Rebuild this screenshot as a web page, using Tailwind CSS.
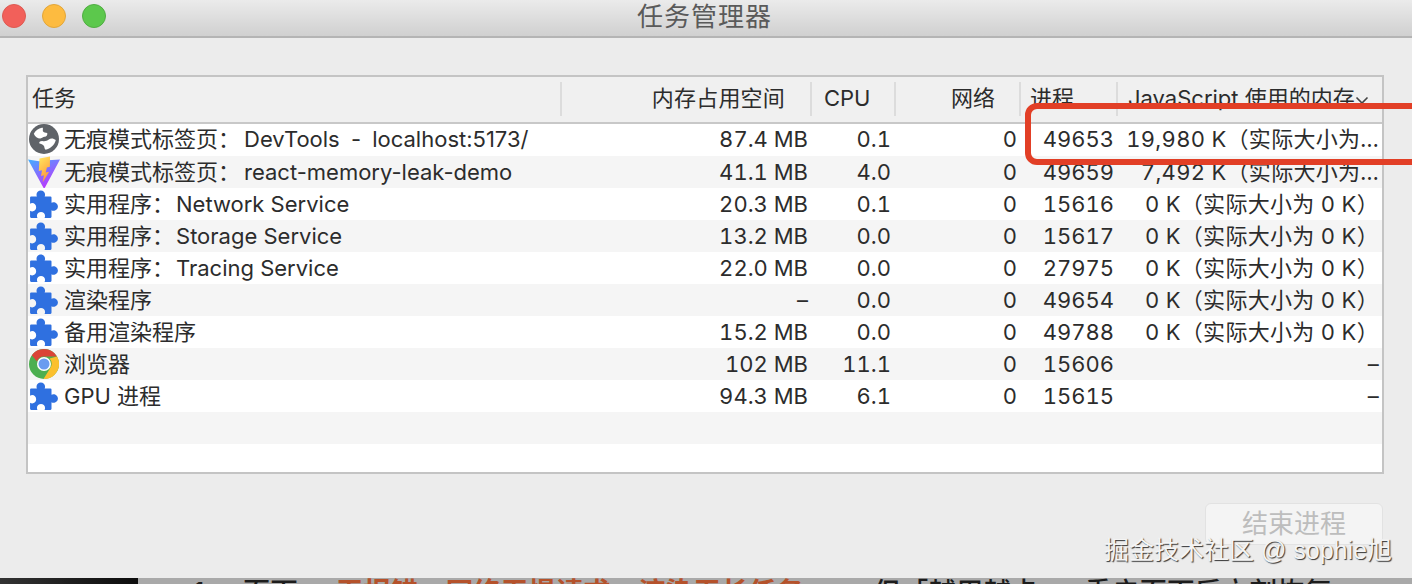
<!DOCTYPE html>
<html lang="zh-CN">
<head>
  <meta charset="UTF-8" />
  <title>任务管理器</title>
  <script src="https://cdn.jsdelivr.net/npm/@tailwindcss/browser@4"></script>
</head>
<body class="bg-[#ececec] font-['Inter','Noto_Sans_CJK_SC',sans-serif] text-[#2c2c2c]">
  <div class="relative w-[1412px] h-[584px] overflow-hidden flex flex-col">

    <!-- Title bar -->
    <header class="relative shrink-0 h-[38px] border-b-2 border-[#b4b4b4] bg-gradient-to-b from-[#ebebeb] to-[#d0d0d0] flex items-center justify-center">
      <div class="absolute left-[2px] top-[4px] flex gap-[16px]">
        <span class="w-[24px] h-[24px] rounded-full bg-[#f2605a] border border-[#dd5a52]"></span>
        <span class="w-[24px] h-[24px] rounded-full bg-[#fdbb40] border border-[#e2a63a]"></span>
        <span class="w-[24px] h-[24px] rounded-full bg-[#5cc84c] border border-[#50ad42]"></span>
      </div>
      <h1 class="text-[26px] leading-none tracking-[1px] text-[#5a5a5a] mt-[-2px] ml-[-3px]">任务管理器</h1>
    </header>

    <!-- Table -->
    <section class="mt-[37px] ml-[26px] w-[1358px] h-[399px] border-2 border-[#c4c4c4] bg-white flex flex-col shrink-0 overflow-hidden">
      <div class="h-[47px] shrink-0 bg-[#f0f0f0] border-b-2 border-[#c8c8c8] grid grid-cols-[532px_250px_84px_125px_97px_1fr] text-[22px] items-center pb-[2px]">
        <div class="pl-[4px]">任务</div>
        <div class="h-[34px] border-l-2 border-[#dcdcdc] pr-[25px] flex items-center justify-end tracking-[0.2px]">内存占用空间</div>
        <div class="h-[34px] border-l-2 border-[#dcdcdc] pl-[12px] flex items-center">CPU</div>
        <div class="h-[34px] border-l-2 border-[#dcdcdc] pr-[24px] flex items-center justify-end">网络</div>
        <div class="h-[34px] border-l-2 border-[#dcdcdc] pl-[9px] flex items-center">进程</div>
        <div class="h-[34px] border-l-2 border-[#dcdcdc] pl-[10px] flex items-center whitespace-nowrap">JavaScript 使用的内存<svg class="w-[14px] h-[9px] mt-[3px]" viewBox="0 0 14 9" fill="none" stroke="#444" stroke-width="1.6"><path d="M1.500 1.500l5.500 5.500 5.500-5.500"/></svg></div>
      </div>

      <div id="rows" class="flex flex-col flex-1 overflow-hidden"></div>
    </section>

    <!-- End process button -->
    <div class="absolute left-[1205px] top-[503px] w-[178px] h-[42px] rounded-[6px] bg-[#f4f4f4] border border-[#e2e2e2] flex items-center justify-center text-[26px] text-[#bdbdbd] pb-[2px]">结束进程</div>

    <!-- Red annotation -->
    <div class="absolute left-[1025px] top-[103px] w-[420px] h-[62px] rounded-[12px] border-[6px] border-[#e23f26]"></div>

    <!-- Watermark -->
    <div class="absolute left-[1104px] top-[534px] font-['Liberation_Sans','Noto_Sans_CJK_SC',sans-serif] text-[25px] leading-[32px] whitespace-nowrap text-[#f4f4f4] [text-shadow:1px_1px_1px_#333]">掘金技术社区 @ sophie旭</div>

    <!-- Next page content, cut off -->
    <div class="absolute left-0 right-0 top-[578px] h-[6px] bg-[#a9a9a9] overflow-hidden flex">
      <div class="w-[138px] h-full shrink-0 bg-gradient-to-r from-[#333333] to-[#0c0c0c]"></div>
      <div class="ml-[55px] mt-[-4px] text-[27.5px] leading-[36px] font-medium whitespace-nowrap text-[#1c1c1c]">1.<span class="ml-[30px]">页面</span><span class="inline-block w-[38px] pl-[8px]">::</span><span class="text-[#b5522b] font-bold">无报错、网络无慢请求、渲染无长任务</span><span class="inline-block w-[70px] pl-[8px]">::</span>但「越用越卡」，<span class="ml-[5px]">重启页面后立刻恢复；</span></div>
    </div>
  </div>

  <svg class="absolute w-0 h-0">
    <defs>
      <linearGradient id="viteA" x1="0" y1="0" x2="0.6" y2="1"><stop offset="0" stop-color="#41b0ff"/><stop offset="1" stop-color="#bd34fe"/></linearGradient>
      <linearGradient id="viteB" x1="0" y1="0" x2="0.4" y2="1"><stop offset="0" stop-color="#ffe95f"/><stop offset="1" stop-color="#ff9a3c"/></linearGradient>
    </defs>
    <symbol id="puzzle" viewBox="0 0 28 28">
      <path fill="#2f70e0" d="M11 1.500c2.300 0 4 1.700 4 3.800 0 .7-.2 1.200-.4 1.700H20a1 1 0 0 1 1 1v4.800c.5-.3 1-.5 1.800-.5 2.200 0 4.200 1.800 4.200 4s-2 4-4.200 4c-.7 0-1.300-.2-1.800-.5V26a1 1 0 0 1-1 1h-5.500c.3-.6.5-1.200.5-1.900 0-2.100-1.800-3.600-3.800-3.600s-3.800 1.500-3.800 3.600c0 .7.200 1.300.5 1.900H2a1 1 0 0 1-1-1v-5.700c.6.400 1.200.6 2 .6 2 0 3.700-1.700 3.700-3.900S5 13.100 3 13.100c-.8 0-1.400.2-2 .6V8a1 1 0 0 1 1-1h5.400c-.2-.5-.4-1-.4-1.700 0-2.100 1.700-3.800 4-3.800z"/>
    </symbol>
    <symbol id="globe" viewBox="0 0 28 28">
      <circle cx="14" cy="14" r="14" fill="#5f6368"/>
      <path fill="#fff" d="M12 3.500c-3 .5-6 2.500-7.500 5.500 1 2.500 3.500 4.500 6 4.500 2 0 2.500-1.500 4-1.500 2 0 3-2 2.500-3.500-1.500-.5-3.500-.5-4-1.800-.3-1 .2-2-.1-3.200z"/>
      <path fill="#fff" d="M25 15c-2-1.500-4.500-2-6.500-.5-1.500 1-3.500 2-5.500 1.500-2-.3-3.500.5-3.500 2 1.500 1 3.500.8 4.500 2.500.5 1.200.5 3 1.500 3.500 4.500-.8 8.500-4.500 9.500-9z"/>
    </symbol>
    <symbol id="vite" viewBox="1 1 30 30" overflow="visible">
      <path fill="url(#viteA)" d="M0 3.500l11 1.800 5-.9 16-1L17 31.500c-.4.700-1.300.700-1.700 0z"/>
      <path fill="url(#viteB)" d="M22 0.500L11.500 2.500 10.800 15l3.200-.7-1 5.700 3-.8-1.300 7 6.500-10.500-3.500.8 1.200-5 3-.8z"/>
    </symbol>
    <symbol id="chrome" viewBox="0 0 30 30">
      <circle cx="15" cy="15" r="15" fill="#4caf50"/>
      <path fill="#db4437" d="M15 0a15 15 0 0 1 13 7.500H15a7.500 7.500 0 0 0-7 5L2.800 6.300A15 15 0 0 1 15 0z"/>
      <path fill="#fbc02d" d="M28 7.500A15 15 0 0 1 14.500 30l6.500-10.500A7.500 7.500 0 0 0 20.500 9.500z"/>
      <circle cx="15" cy="15" r="7" fill="#fff"/>
      <circle cx="15" cy="15" r="5.500" fill="#6a9cf0"/>
    </symbol>
  </svg>

  <script>
    const tasks = [
      { icon: "globe", name: '无痕模式标签页：<span class="ml-[4px] [word-spacing:5px]">DevTools - localhost:5173/</span>', mem: "87.4 MB", cpu: "0.1", pid: "49653", js: "19,980 K（实际大小为..." },
      { icon: "vite", name: '无痕模式标签页：<span class="ml-[4px]">react-memory-leak-demo</span>', mem: "41.1 MB", cpu: "4.0", pid: "49659", js: "7,492 K（实际大小为..." },
      { icon: "puzzle", name: '实用程序：<span class="ml-[2px]">Network Service</span>', mem: "20.3 MB", cpu: "0.1", pid: "15616", js: "0 K（实际大小为 0 K）" },
      { icon: "puzzle", name: '实用程序：<span class="ml-[2px]">Storage Service</span>', mem: "13.2 MB", cpu: "0.0", pid: "15617", js: "0 K（实际大小为 0 K）" },
      { icon: "puzzle", name: '实用程序：<span class="ml-[2px]">Tracing Service</span>', mem: "22.0 MB", cpu: "0.0", pid: "27975", js: "0 K（实际大小为 0 K）" },
      { icon: "puzzle", name: "渲染程序", mem: "–", cpu: "0.0", pid: "49654", js: "0 K（实际大小为 0 K）" },
      { icon: "puzzle", name: "备用渲染程序", mem: "15.2 MB", cpu: "0.0", pid: "49788", js: "0 K（实际大小为 0 K）" },
      { icon: "chrome", name: "浏览器", mem: "102 MB", cpu: "11.1", pid: "15606", js: "–" },
      { icon: "puzzle", name: "GPU 进程", mem: "94.3 MB", cpu: "6.1", pid: "15615", js: "–" },
      {},
      {}
    ];

    document.getElementById("rows").innerHTML = tasks.map((t, i) => `
      <div class="h-[32px] shrink-0 grid grid-cols-[532px_250px_84px_125px_97px_1fr] items-center text-[22px] leading-none whitespace-nowrap ${i === 0 ? "pb-[2px]" : ""} ${i % 2 ? "bg-[#f5f5f5]" : "bg-white"}">
        ${t.name ? `
        <div class="flex items-center">
          <svg class="w-[30px] h-[30px] ml-[1px] mr-[5px] shrink-0 overflow-visible"><use href="#${t.icon}"/></svg>
          <span>${t.name}</span>
        </div>
        <div class="text-right pr-[2px] tabular-nums">${t.mem}</div>
        <div class="text-right pr-[3px] tabular-nums">${t.cpu}</div>
        <div class="text-right pr-[2px] tabular-nums">0</div>
        <div class="text-right pr-[2px] tabular-nums">${t.pid}</div>
        <div class="text-right pr-[3px] tabular-nums tracking-[0.3px]">${t.js}</div>` : ""}
      </div>`).join("");
  </script>
</body>
</html>
